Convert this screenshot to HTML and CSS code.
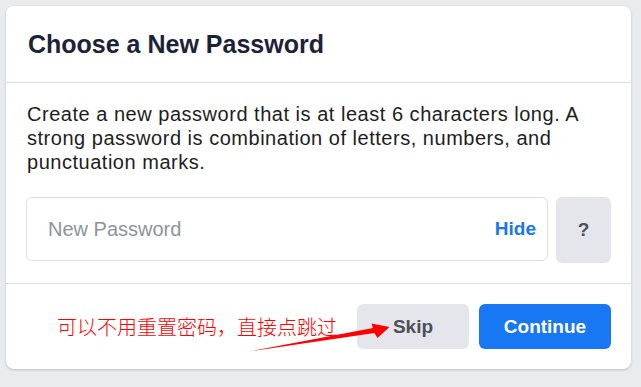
FILE: index.html
```html
<!DOCTYPE html>
<html lang="en">
<head>
<meta charset="utf-8">
<title>Choose a New Password</title>
<link rel="stylesheet" href="styles.css">
</head>
<body>
<div class="card">
  <div class="card-header">
    <h2 class="title">Choose a New Password</h2>
  </div>
  <div class="card-body">
    <p class="desc">Create a new password that is at least 6 characters long. A strong password is combination of letters, numbers, and punctuation marks.</p>
    <div class="pw-row">
      <div class="pw-input">
        <span class="placeholder">New Password</span>
        <span class="hide">Hide</span>
      </div>
      <div class="help-btn">?</div>
    </div>
  </div>
  <div class="card-footer">
    <span class="note">可以不用重置密码，直接点跳过</span>
    <div class="btn btn-skip">Skip</div>
    <div class="btn btn-continue">Continue</div>
  </div>
  <svg class="arrow" width="625" height="363" viewBox="0 0 625 363" aria-hidden="true">
    <polygon fill="#ff0000" points="243,345.5 367,322 365.5,317.5 383.5,321 371.5,332 368.5,327"/>
  </svg>
</div>
</body>
</html>
```

FILE: styles.css
```css
html, body {
  margin: 0;
  padding: 0;
}
body {
  background: #e9ebee;
  font-family: "Liberation Sans", Arial, Helvetica, sans-serif;
  padding: 6px 0 0 6px;
  width: 641px;
  height: 387px;
  box-sizing: border-box;
  overflow: hidden;
}
.card {
  position: relative;
  width: 625px;
  height: 363px;
  background: #fff;
  border-radius: 8px;
  box-shadow: 0 1px 3px rgba(0, 0, 0, 0.12), 0 1px 2px rgba(0, 0, 0, 0.08);
  display: flex;
  flex-direction: column;
}
.card-header {
  height: 76px;
  border-bottom: 1px solid #dadde1;
  display: flex;
  align-items: center;
  padding-left: 22px;
}
.title {
  margin: 0;
  font-size: 25px;
  font-weight: 700;
  color: #1c2337;
}
.card-body {
  padding: 19px 20px 20px 20px;
  border-bottom: 1px solid #dadde1;
}
.desc {
  margin: 0 0 23px 1px;
  font-size: 20px;
  letter-spacing: 0.52px;
  line-height: 24px;
  color: #1c1e21;
}
.pw-row {
  display: flex;
  gap: 8px;
  align-items: flex-start;
}
.pw-input {
  flex: 1;
  height: 64px;
  box-sizing: border-box;
  border: 1px solid #dddfe2;
  border-radius: 6px;
  display: flex;
  align-items: center;
  justify-content: space-between;
  padding: 0 11px 0 21px;
}
.placeholder {
  font-size: 20px;
  color: #8d949e;
}
.hide {
  font-size: 19px;
  font-weight: 700;
  color: #1877f2;
}
.help-btn {
  width: 55px;
  height: 66px;
  border-radius: 6px;
  background: #e4e6eb;
  display: flex;
  align-items: center;
  justify-content: center;
  font-size: 19px;
  font-weight: 700;
  color: #4b4f56;
}
.card-footer {
  flex: 1;
  display: flex;
  align-items: center;
  padding: 0 20px;
  gap: 10px;
}
.note {
  margin-left: 31px;
  margin-right: auto;
  font-family: "Noto Sans CJK SC", sans-serif;
  font-size: 20px;
  font-weight: 300;
  color: #ff0000;
}
.btn {
  height: 45px;
  border-radius: 6px;
  display: flex;
  align-items: center;
  justify-content: center;
  font-size: 19px;
  font-weight: 700;
}
.btn-skip {
  width: 112px;
  background: #e4e6eb;
  color: #4b4f56;
}
.btn-continue {
  width: 132px;
  background: #1877f2;
  color: #fff;
}
.arrow {
  position: absolute;
  left: 0;
  top: 0;
  pointer-events: none;
}
```
